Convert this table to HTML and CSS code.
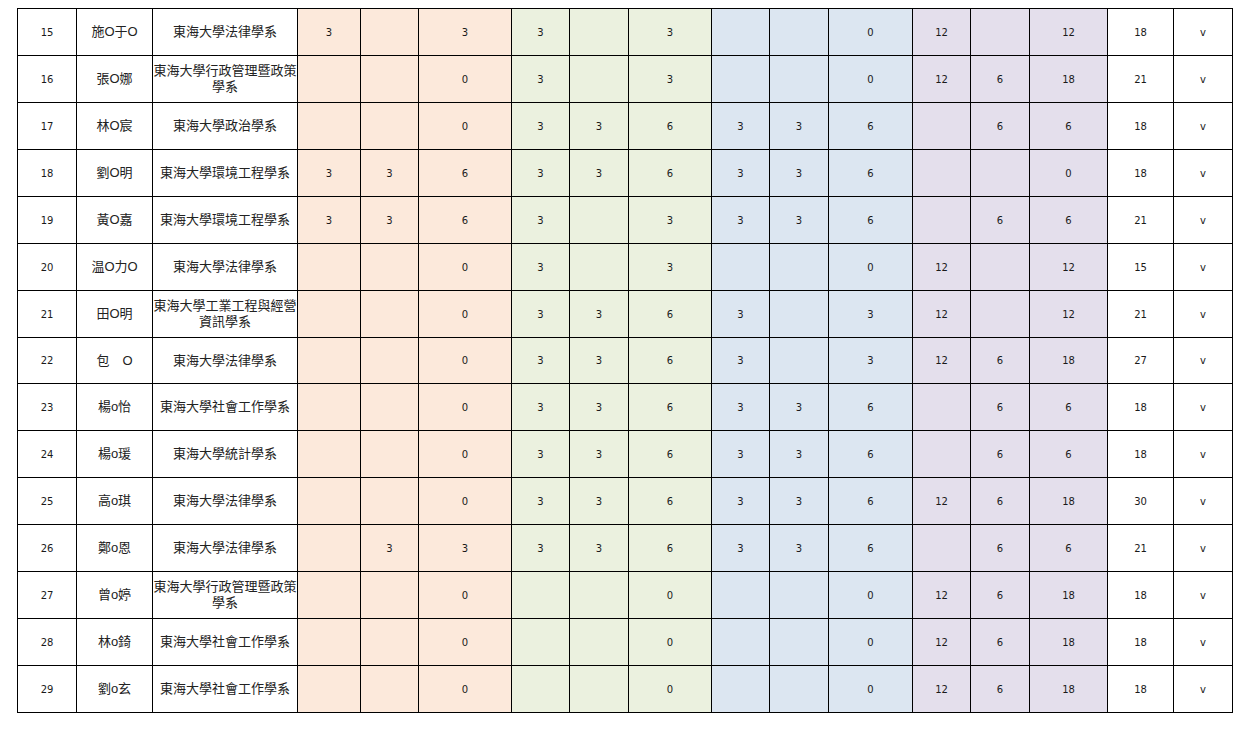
FILE: index.html
```html
<!DOCTYPE html>
<html lang="zh-Hant">
<head>
<meta charset="utf-8">
<title>名單</title>
<link rel="stylesheet" href="styles.css">
</head>
<body>
<table class="sheet">
<colgroup>
<col class="w59"><col class="w76"><col class="w145">
<col class="w63"><col class="w58"><col class="w93">
<col class="w58"><col class="w59"><col class="w83">
<col class="w58"><col class="w59"><col class="w84">
<col class="w58"><col class="w59"><col class="w78">
<col class="w66"><col class="w59">
</colgroup>
<tbody>
<tr><td class="n">15</td><td class="t">施O于O</td><td class="t">東海大學法律學系</td><td class="a n">3</td><td class="a n"></td><td class="a n">3</td><td class="b n">3</td><td class="b n"></td><td class="b n">3</td><td class="c n"></td><td class="c n"></td><td class="c n">0</td><td class="d n">12</td><td class="d n"></td><td class="d n">12</td><td class="n">18</td><td class="n">v</td></tr>
<tr><td class="n">16</td><td class="t">張O娜</td><td class="t">東海大學行政管理暨政策學系</td><td class="a n"></td><td class="a n"></td><td class="a n">0</td><td class="b n">3</td><td class="b n"></td><td class="b n">3</td><td class="c n"></td><td class="c n"></td><td class="c n">0</td><td class="d n">12</td><td class="d n">6</td><td class="d n">18</td><td class="n">21</td><td class="n">v</td></tr>
<tr><td class="n">17</td><td class="t">林O宸</td><td class="t">東海大學政治學系</td><td class="a n"></td><td class="a n"></td><td class="a n">0</td><td class="b n">3</td><td class="b n">3</td><td class="b n">6</td><td class="c n">3</td><td class="c n">3</td><td class="c n">6</td><td class="d n"></td><td class="d n">6</td><td class="d n">6</td><td class="n">18</td><td class="n">v</td></tr>
<tr><td class="n">18</td><td class="t">劉O明</td><td class="t">東海大學環境工程學系</td><td class="a n">3</td><td class="a n">3</td><td class="a n">6</td><td class="b n">3</td><td class="b n">3</td><td class="b n">6</td><td class="c n">3</td><td class="c n">3</td><td class="c n">6</td><td class="d n"></td><td class="d n"></td><td class="d n">0</td><td class="n">18</td><td class="n">v</td></tr>
<tr><td class="n">19</td><td class="t">黃O嘉</td><td class="t">東海大學環境工程學系</td><td class="a n">3</td><td class="a n">3</td><td class="a n">6</td><td class="b n">3</td><td class="b n"></td><td class="b n">3</td><td class="c n">3</td><td class="c n">3</td><td class="c n">6</td><td class="d n"></td><td class="d n">6</td><td class="d n">6</td><td class="n">21</td><td class="n">v</td></tr>
<tr><td class="n">20</td><td class="t">温O力O</td><td class="t">東海大學法律學系</td><td class="a n"></td><td class="a n"></td><td class="a n">0</td><td class="b n">3</td><td class="b n"></td><td class="b n">3</td><td class="c n"></td><td class="c n"></td><td class="c n">0</td><td class="d n">12</td><td class="d n"></td><td class="d n">12</td><td class="n">15</td><td class="n">v</td></tr>
<tr><td class="n">21</td><td class="t">田O明</td><td class="t">東海大學工業工程與經營資訊學系</td><td class="a n"></td><td class="a n"></td><td class="a n">0</td><td class="b n">3</td><td class="b n">3</td><td class="b n">6</td><td class="c n">3</td><td class="c n"></td><td class="c n">3</td><td class="d n">12</td><td class="d n"></td><td class="d n">12</td><td class="n">21</td><td class="n">v</td></tr>
<tr class="short"><td class="n">22</td><td class="t">包　O</td><td class="t">東海大學法律學系</td><td class="a n"></td><td class="a n"></td><td class="a n">0</td><td class="b n">3</td><td class="b n">3</td><td class="b n">6</td><td class="c n">3</td><td class="c n"></td><td class="c n">3</td><td class="d n">12</td><td class="d n">6</td><td class="d n">18</td><td class="n">27</td><td class="n">v</td></tr>
<tr><td class="n">23</td><td class="t">楊o怡</td><td class="t">東海大學社會工作學系</td><td class="a n"></td><td class="a n"></td><td class="a n">0</td><td class="b n">3</td><td class="b n">3</td><td class="b n">6</td><td class="c n">3</td><td class="c n">3</td><td class="c n">6</td><td class="d n"></td><td class="d n">6</td><td class="d n">6</td><td class="n">18</td><td class="n">v</td></tr>
<tr><td class="n">24</td><td class="t">楊o瑗</td><td class="t">東海大學統計學系</td><td class="a n"></td><td class="a n"></td><td class="a n">0</td><td class="b n">3</td><td class="b n">3</td><td class="b n">6</td><td class="c n">3</td><td class="c n">3</td><td class="c n">6</td><td class="d n"></td><td class="d n">6</td><td class="d n">6</td><td class="n">18</td><td class="n">v</td></tr>
<tr><td class="n">25</td><td class="t">高o琪</td><td class="t">東海大學法律學系</td><td class="a n"></td><td class="a n"></td><td class="a n">0</td><td class="b n">3</td><td class="b n">3</td><td class="b n">6</td><td class="c n">3</td><td class="c n">3</td><td class="c n">6</td><td class="d n">12</td><td class="d n">6</td><td class="d n">18</td><td class="n">30</td><td class="n">v</td></tr>
<tr><td class="n">26</td><td class="t">鄭o恩</td><td class="t">東海大學法律學系</td><td class="a n"></td><td class="a n">3</td><td class="a n">3</td><td class="b n">3</td><td class="b n">3</td><td class="b n">6</td><td class="c n">3</td><td class="c n">3</td><td class="c n">6</td><td class="d n"></td><td class="d n">6</td><td class="d n">6</td><td class="n">21</td><td class="n">v</td></tr>
<tr><td class="n">27</td><td class="t">曾o婷</td><td class="t">東海大學行政管理暨政策學系</td><td class="a n"></td><td class="a n"></td><td class="a n">0</td><td class="b n"></td><td class="b n"></td><td class="b n">0</td><td class="c n"></td><td class="c n"></td><td class="c n">0</td><td class="d n">12</td><td class="d n">6</td><td class="d n">18</td><td class="n">18</td><td class="n">v</td></tr>
<tr><td class="n">28</td><td class="t">林o錡</td><td class="t">東海大學社會工作學系</td><td class="a n"></td><td class="a n"></td><td class="a n">0</td><td class="b n"></td><td class="b n"></td><td class="b n">0</td><td class="c n"></td><td class="c n"></td><td class="c n">0</td><td class="d n">12</td><td class="d n">6</td><td class="d n">18</td><td class="n">18</td><td class="n">v</td></tr>
<tr><td class="n">29</td><td class="t">劉o玄</td><td class="t">東海大學社會工作學系</td><td class="a n"></td><td class="a n"></td><td class="a n">0</td><td class="b n"></td><td class="b n"></td><td class="b n">0</td><td class="c n"></td><td class="c n"></td><td class="c n">0</td><td class="d n">12</td><td class="d n">6</td><td class="d n">18</td><td class="n">18</td><td class="n">v</td></tr>
</tbody>
</table>
</body>
</html>
```
FILE: styles.css
```css
html, body {
  background: #ffffff;
}
body {
  margin: 8px 0 0 17px;
  color: #1a1a1a;
}
.sheet {
  border-collapse: collapse;
  table-layout: fixed;
  width: 1216px;
}
.sheet tr {
  height: 47px;
}
.sheet tr.short {
  height: 46px;
}
.sheet td {
  border: 1px solid #000;
  text-align: center;
  vertical-align: middle;
  padding: 0;
  overflow: hidden;
}
.n {
  font-family: "DejaVu Sans", "Noto Sans CJK TC", sans-serif;
  font-size: 10px;
}
.sheet td.t {
  font-family: "Liberation Sans", "Noto Sans CJK TC", sans-serif;
  font-size: 13px;
  line-height: 16px;
  color: #222;
}
.a { background: #fce9db; }
.b { background: #ebf1df; }
.c { background: #dce6f1; }
.d { background: #e4dfec; }
.w59 { width: 59px; }
.w76 { width: 76px; }
.w145 { width: 145px; }
.w63 { width: 63px; }
.w58 { width: 58px; }
.w93 { width: 93px; }
.w83 { width: 83px; }
.w84 { width: 84px; }
.w78 { width: 78px; }
.w66 { width: 66px; }
```
